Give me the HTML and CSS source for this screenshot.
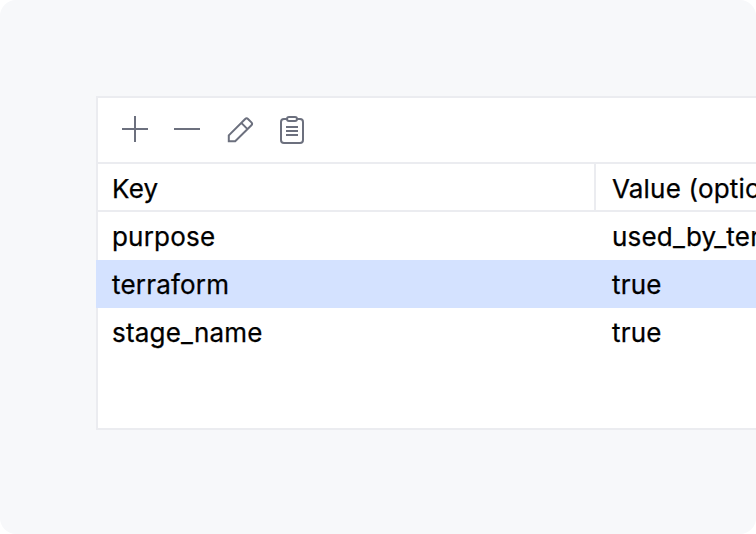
FILE: index.html
```html
<!DOCTYPE html>
<html lang="en">
<head>
<meta charset="utf-8">
<title>Labels</title>
<link rel="stylesheet" href="styles.css">
</head>
<body>
<main class="stage">
  <section class="panel">
    <div class="toolbar">
      <svg class="icon" viewBox="0 0 32 32"><path d="M2 15H28M15 2V28"/></svg>
      <svg class="icon" viewBox="0 0 32 32"><path d="M2 15H28"/></svg>
      <svg class="icon" viewBox="0 0 32 32"><path d="M4.8 27.2V21.4L21.2 5Q22.6 3.6 24 5L27.4 8.4Q28.8 9.8 27.4 11.2L11.2 27.2ZM17.3 8.9L23.5 15.1"/></svg>
      <svg class="icon" viewBox="0 0 32 32"><path d="M11 5H8a3 3 0 0 0-3 3V26a3 3 0 0 0 3 3H24a3 3 0 0 0 3-3V8a3 3 0 0 0-3-3H21M13 3H19a2 2 0 0 1 2 2a2 2 0 0 1-2 2H13a2 2 0 0 1-2-2a2 2 0 0 1 2-2ZM10 13H22M10 17H22M10 21H22"/></svg>
    </div>
    <div class="row header"><div class="cell">Key</div><div class="cell">Value (optional)</div></div>
    <div class="row"><div class="cell">purpose</div><div class="cell">used_by_terraform</div></div>
    <div class="row selected"><div class="cell">terraform</div><div class="cell">true</div></div>
    <div class="row"><div class="cell">stage_name</div><div class="cell">true</div></div>
  </section>
</main>
</body>
</html>
```
FILE: styles.css
```css
* { box-sizing: border-box; }
body {
  margin: 0;
  background: #fff;
  color: #000;
  font: 400 26px/48px Inter, sans-serif;
  letter-spacing: 0.2px;
  -webkit-text-stroke: 0.25px #000;
}
.stage {
  height: 534px;
  padding: 96px 0 0 96px;
  overflow: hidden;
  border-radius: 16px;
  background: #f7f8fa;
}
.panel {
  width: 900px;
  height: 334px;
  border: 2px solid #ebecf0;
  background: #fff;
}
.toolbar {
  display: flex;
  gap: 20px;
  height: 66px;
  padding: 16px 22px;
  border-bottom: 2px solid #ebecf0;
}
.icon {
  width: 32px;
  height: 32px;
  fill: none;
  stroke: #6c707e;
  stroke-width: 2;
}
.row {
  display: grid;
  grid-template-columns: 498px 1fr;
  height: 48px;
  margin-left: -2px;
  padding-left: 2px;
  white-space: nowrap;
}
.cell { padding-left: 14px; padding-top: 1px; }
.cell + .cell { padding-left: 16px; }
.header { border-bottom: 2px solid #ebecf0; }
.header .cell { height: 46px; }
.header .cell:first-child { border-right: 2px solid #ebecf0; }
.selected { background: #d4e2ff; }
```
